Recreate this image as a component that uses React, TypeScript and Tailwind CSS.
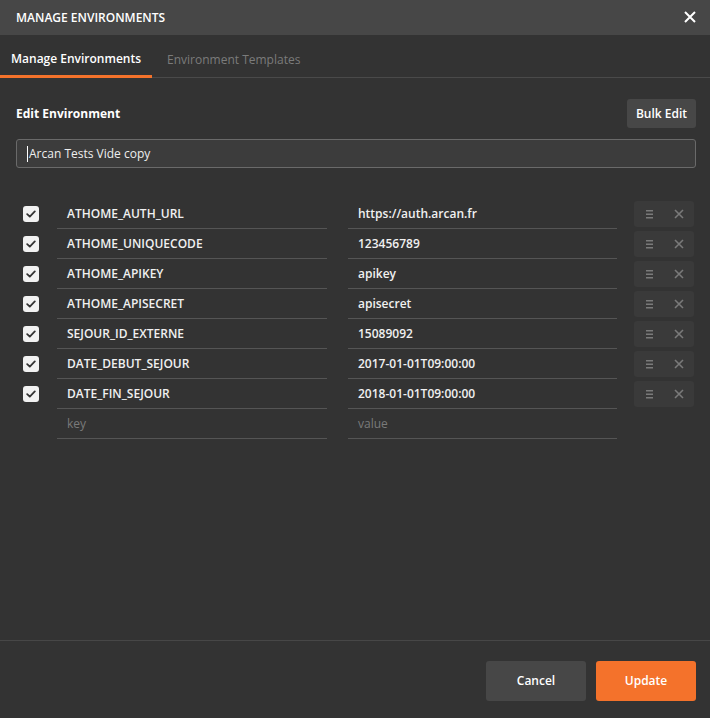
import React from 'react'

const rows = [
  { key: 'ATHOME_AUTH_URL', value: 'https://auth.arcan.fr' },
  { key: 'ATHOME_UNIQUECODE', value: '123456789' },
  { key: 'ATHOME_APIKEY', value: 'apikey' },
  { key: 'ATHOME_APISECRET', value: 'apisecret' },
  { key: 'SEJOUR_ID_EXTERNE', value: '15089092' },
  { key: 'DATE_DEBUT_SEJOUR', value: '2017-01-01T09:00:00' },
  { key: 'DATE_FIN_SEJOUR', value: '2018-01-01T09:00:00' },
]

function Check() {
  return (
    <div className="w-4 h-4 rounded-[3px] bg-[#f2f2f2] flex items-center justify-center">
      <svg width="10" height="8" viewBox="0 0 10 8" fill="none">
        <path d="M1.2 4.2 L3.8 6.6 L8.8 1.4" stroke="#333" strokeWidth="1.8" strokeLinecap="round" strokeLinejoin="round" />
      </svg>
    </div>
  )
}

function RowActions() {
  return (
    <div className="w-[60px] h-[26px] rounded-[3px] bg-[#3a3a3a] flex items-center">
      <svg className="ml-[12px]" width="7" height="9" viewBox="0 0 7 9">
        <rect x="0" y="0" width="7" height="1.5" fill="#7a7a7a" />
        <rect x="0" y="3.5" width="7" height="1.5" fill="#7a7a7a" />
        <rect x="0" y="7" width="7" height="1.5" fill="#7a7a7a" />
      </svg>
      <svg className="ml-[21px]" width="10" height="10" viewBox="0 0 10 10">
        <path d="M1 1 L9 9 M9 1 L1 9" stroke="#7a7a7a" strokeWidth="1.6" />
      </svg>
    </div>
  )
}

export default function App() {
  return (
    <div
      className="w-[710px] h-[718px] bg-[#333333] flex flex-col text-[12px]"
      style={{ fontFamily: '"Open Sans", sans-serif' }}
    >
      {/* Header */}
      <div className="h-[35px] bg-[#474747] flex items-center justify-between pl-4 pr-[14px] shrink-0">
        <span className="text-white text-[12px] font-semibold">MANAGE ENVIRONMENTS</span>
        <svg className="-mt-[2px]" width="12" height="12" viewBox="0 0 12 12">
          <path d="M1 1 L11 11 M11 1 L1 11" stroke="#fff" strokeWidth="2" />
        </svg>
      </div>

      {/* Tabs */}
      <div className="h-[43px] flex border-b border-[#4a4a4a] shrink-0">
        <div className="w-[152px] pl-[11px] flex items-center pt-[7px] border-b-[3px] border-[#f4722b] -mb-px text-white font-semibold">
          Manage Environments
        </div>
        <div className="pl-[15px] flex items-center pt-[7px] text-[#7b7b7b]">Environment Templates</div>
      </div>

      {/* Body */}
      <div className="flex-1 pl-4 pr-[14px] pt-[21px]">
        <div className="flex items-center justify-between">
          <span className="text-white font-bold">Edit Environment</span>
          <button className="h-[29px] w-[69px] flex items-center justify-center rounded-[3px] bg-[#474747] text-white font-semibold">
            Bulk Edit
          </button>
        </div>

        <div className="mt-[11px] h-[29px] rounded-[3px] border border-[#6a6a6a] bg-[#3c3c3c] flex items-center pl-[10px] text-[#eeeeee]">
          <span className="w-px h-[16px] bg-white mr-[1px]" />
          Arcan Tests Vide copy
        </div>

        <div className="mt-[31px]">
          {rows.map((r) => (
            <div key={r.key} className="h-[30px] flex items-center">
              <div className="w-[41px] pl-[7px]">
                <Check />
              </div>
              <div className="w-[270px] h-[30px] border-b border-[#555] flex items-center pl-[10px] text-[#f0f0f0] font-semibold">
                {r.key}
              </div>
              <div className="w-[269px] ml-[21px] h-[30px] border-b border-[#555] flex items-center pl-[10px] text-[#f0f0f0] font-semibold">
                {r.value}
              </div>
              <div className="ml-[17px] self-start mt-[2px]">
                <RowActions />
              </div>
            </div>
          ))}
          <div className="h-[30px] flex items-center">
            <div className="w-[41px]" />
            <div className="w-[270px] h-[30px] border-b border-[#555] flex items-center pl-[10px] text-[#7a7a7a]">
              key
            </div>
            <div className="w-[269px] ml-[21px] h-[30px] border-b border-[#555] flex items-center pl-[10px] text-[#7a7a7a]">
              value
            </div>
          </div>
        </div>
      </div>

      {/* Footer */}
      <div className="h-[78px] border-t border-[#474747] flex items-start justify-end gap-[10px] pt-[20px] pr-[14px] shrink-0">
        <button className="w-[100px] h-[40px] rounded-[3px] bg-[#474747] text-white font-semibold">Cancel</button>
        <button className="w-[100px] h-[40px] rounded-[3px] bg-[#f4722b] text-white font-semibold">Update</button>
      </div>
    </div>
  )
}
